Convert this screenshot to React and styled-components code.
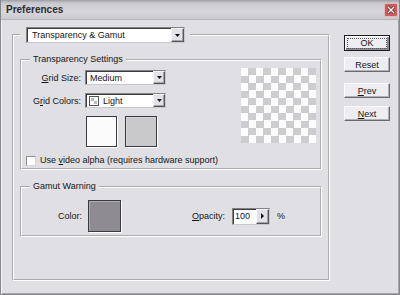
import styled, { createGlobalStyle } from "styled-components";

const GlobalStyle = createGlobalStyle`
  html, body { margin: 0; padding: 0; background: #e0dfe3; }
  body {
    font-family: "Liberation Sans", Arial, sans-serif;
    font-size: 9px;
    color: #151515;
  }
`;

const Window = styled.div`
  width: 400px;
  height: 295px;
  box-sizing: border-box;
  display: flex;
  flex-direction: column;
  background: #e0dfe3;
  border: 1px solid #85858c;
  border-top: 0;
  box-shadow: inset 1px 0 0 #f4f4f6, inset -1px -1px 0 #a5a5ab;
`;

const TitleBar = styled.div`
  height: 20px;
  flex: none;
  box-sizing: border-box;
  display: flex;
  align-items: center;
  justify-content: space-between;
  padding: 0 1px 0 5px;
  background: linear-gradient(#9d9da5 0, #c9c9ce 3px, #d7d7db 60%, #cbcbd0 100%);
  border-bottom: 1px solid #b2b2b8;
`;

const Title = styled.span`
  font-size: 10px;
  font-weight: bold;
  color: #2a2a2e;
`;

const CloseButton = styled.div`
  width: 14px;
  height: 14px;
  box-sizing: border-box;
  display: flex;
  align-items: center;
  justify-content: center;
  background: #c65a5c;
  border: 1px solid #e9b9b9;
  border-radius: 2px;
`;

const Content = styled.div`
  flex: 1;
  display: flex;
  align-items: flex-start;
  padding: 7px 0 0 11px;
`;

const Group = styled.fieldset`
  margin: 0;
  min-width: 0;
  border: 2px groove #ffffff;
  padding: ${p => p.$pad};
`;

const MainGroup = styled(Group)`
  width: 318px;
  box-sizing: border-box;
`;

const Legend = styled.legend`
  padding: 0 3px;
  margin-left: 4px;
  line-height: 11px;
`;

const MainLegend = styled.legend`
  padding: 0 5px 0 6px;
  margin: 0;
`;

const SubGroup = styled(Group)`
  & + & { margin-top: 11px; }
`;

const Combo = styled.div`
  width: ${p => p.$w}px;
  height: ${p => p.$h || 15}px;
  box-sizing: border-box;
  display: flex;
  align-items: center;
  background: #fff;
  border: 1px solid #828288;
  border-right-color: #c8c8cc;
  border-bottom-color: #c8c8cc;
  box-shadow: inset 1px 1px 0 #3c3c40;
  padding-left: ${p => p.$pl || 4}px;
  gap: 4px;
`;

const GridCombo = styled(Combo)`
  grid-column: 2;
`;

const ComboText = styled.span`
  flex: 1;
  white-space: nowrap;
`;

const ArrowBox = styled.div`
  width: ${p => p.$w || 12}px;
  align-self: stretch;
  box-sizing: border-box;
  display: flex;
  align-items: center;
  justify-content: center;
  background: #e3e2e6;
  border: 1px solid #f8f8f8;
  border-right-color: #55555a;
  border-bottom-color: #55555a;
  box-shadow: inset -1px -1px 0 #a3a3a8;
`;

const SettingsGrid = styled.div`
  display: grid;
  grid-template-columns: 55px auto 1fr 75px;
  column-gap: 4px;
  row-gap: 8px;
  align-items: center;
`;

const Label = styled.span`
  text-align: right;
  white-space: nowrap;
  ${p => p.$w && `width: ${p.$w}px;`}
`;

const GridLabel = styled(Label)`
  grid-column: 1;
`;

const Swatches = styled.div`
  grid-column: 2;
  display: flex;
  gap: 8px;
  margin-left: 1px;
`;

const Swatch = styled.div`
  width: ${p => p.$w}px;
  height: ${p => p.$h}px;
  box-sizing: border-box;
  background: ${p => p.$color};
  border: 1px solid #3a3a3e;
  box-shadow: inset 1px 1px 0 #ffffff44, 1px 1px 0 #ffffff;
`;

const Preview = styled.div`
  grid-column: 4;
  grid-row: 1 / span 3;
  align-self: start;
  height: 75px;
  margin-top: -2px;
  background: repeating-conic-gradient(#cdcdcf 0 25%, #fcfcfc 0 50%) 0 0 / 15px 15px;
`;

const CheckRow = styled.label`
  grid-column: 1 / -1;
  display: flex;
  align-items: center;
  gap: 4px;
  line-height: 11px;
`;

const CheckBox = styled.span`
  width: 10px;
  height: 10px;
  box-sizing: border-box;
  background: #fff;
  border: 1px solid #8c8c92;
  border-right-color: #d8d8dc;
  border-bottom-color: #d8d8dc;
`;

const GamutRow = styled.div`
  display: flex;
  align-items: center;
`;

const Spaced = styled.div`
  margin-left: ${p => p.$ml}px;
  display: flex;
  align-items: center;
`;

const Side = styled.div`
  width: 46px;
  margin-left: 14px;
  padding-top: 8px;
  display: flex;
  flex-direction: column;
`;

const Button = styled.button`
  height: 15px;
  margin: ${p => p.$mt || 0}px 0 0;
  padding: 0;
  font: inherit;
  color: inherit;
  background: #eeedf1;
  border: 1px solid #fbfbfb;
  border-right-color: #6a6a70;
  border-bottom-color: #6a6a70;
  box-shadow: inset -1px -1px 0 #b0b0b5;
  ${p => p.$default && `
    height: 16px;
    border: 1px solid #1c1c1c;
    box-shadow: inset 1px 1px 0 #fbfbfb, inset -2px -2px 0 #8a8a90;
  `}
`;

const FocusRect = styled.span`
  display: block;
  margin: 0 2px;
  border: 1px dotted #555;
  line-height: 8px;
  padding-bottom: 1px;
`;

const Key = styled.u`
  text-decoration: underline;
  text-underline-offset: 1px;
`;

const Down = () => (
  <svg width="5" height="3" viewBox="0 0 5 3"><path d="M0 0h5L2.5 3z" fill="#111" /></svg>
);

const Right = () => (
  <svg width="3" height="6" viewBox="0 0 3 6"><path d="M0 0v6l3-3z" fill="#111" /></svg>
);

const GridIcon = () => (
  <svg width="10" height="10" viewBox="0 0 10 10">
    <rect x="0.5" y="0.5" width="9" height="9" fill="#fff" stroke="#555" />
    <rect x="2" y="2" width="3" height="3" fill="#bbb" />
    <rect x="5" y="5" width="3" height="3" fill="#bbb" />
  </svg>
);

export default function App() {
  return (
    <>
      <GlobalStyle />
      <Window>
        <TitleBar>
          <Title>Preferences</Title>
          <CloseButton>
            <svg width="8" height="8" viewBox="0 0 8 8">
              <path d="M1 1l6 6M7 1L1 7" stroke="#7a1e20" strokeWidth="2.6" />
              <path d="M1 1l6 6M7 1L1 7" stroke="#fff" strokeWidth="1.4" />
            </svg>
          </CloseButton>
        </TitleBar>
        <Content>
          <MainGroup $pad="11px 6px 42px">
            <MainLegend>
              <Combo $w={159} $h={16} $pl={5}>
                <ComboText>Transparency &amp; Gamut</ComboText>
                <ArrowBox $w={13}><Down /></ArrowBox>
              </Combo>
            </MainLegend>
            <SubGroup $pad="5px 4px 2px">
              <Legend>Transparency Settings</Legend>
              <SettingsGrid>
                <Preview />
                <GridLabel><Key>G</Key>rid Size:</GridLabel>
                <GridCombo $w={81}>
                  <ComboText>Medium</ComboText>
                  <ArrowBox><Down /></ArrowBox>
                </GridCombo>
                <GridLabel>G<Key>r</Key>id Colors:</GridLabel>
                <GridCombo $w={81} $pl={3}>
                  <GridIcon />
                  <ComboText>Light</ComboText>
                  <ArrowBox><Down /></ArrowBox>
                </GridCombo>
                <Swatches>
                  <Swatch $w={31} $h={31} $color="#fbfbfb" />
                  <Swatch $w={32} $h={31} $color="#c9c9cc" />
                </Swatches>
                <CheckRow>
                  <CheckBox />
                  <span>Use <Key>v</Key>ideo alpha (requires hardware support)</span>
                </CheckRow>
              </SettingsGrid>
            </SubGroup>
            <SubGroup $pad="8px 4px 3px">
              <Legend>Gamut Warning</Legend>
              <GamutRow>
                <Label $w={56}>Color:</Label>
                <Spaced $ml={6}>
                  <Swatch $w={33} $h={32} $color="#8e8c92" />
                </Spaced>
                <Spaced $ml={71}>
                  <Label><Key>O</Key>pacity:</Label>
                </Spaced>
                <Spaced $ml={7}>
                  <Combo $w={38} $h={17} $pl={2}>
                    <ComboText>100</ComboText>
                    <ArrowBox $w={13}><Right /></ArrowBox>
                  </Combo>
                </Spaced>
                <Spaced $ml={7}>%</Spaced>
              </GamutRow>
            </SubGroup>
          </MainGroup>
          <Side>
            <Button $default><FocusRect>OK</FocusRect></Button>
            <Button $mt={6}>Reset</Button>
            <Button $mt={11}><Key>P</Key>rev</Button>
            <Button $mt={8}><Key>N</Key>ext</Button>
          </Side>
        </Content>
      </Window>
    </>
  );
}
